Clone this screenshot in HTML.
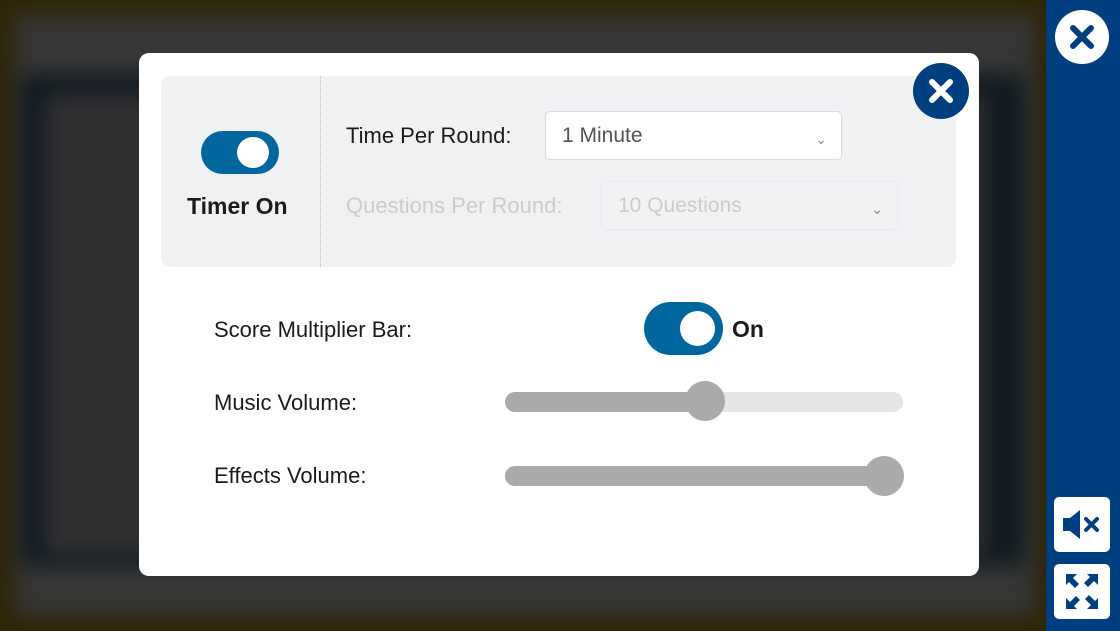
<!DOCTYPE html>
<html><head><style>
body{margin:0;width:1120px;height:631px;overflow:hidden;position:relative;background:#2f2608;font-family:"Liberation Sans",sans-serif}
.bg{position:absolute;filter:blur(10px)}
.t{position:absolute;color:#1b1b1b;white-space:nowrap}
.card{position:absolute;left:139px;top:53px;width:840px;height:523px;background:#fff;border-radius:10px}
.sel{position:absolute;border:1px solid #d6d9e6;border-radius:5px;background:#fff;font-size:21px;color:#555;padding-left:16px;box-sizing:border-box}
.sel:after{content:"⌄";position:absolute;right:14px;top:4px;font-size:14px;color:#888}
.sb{position:absolute;width:56px;height:55px;left:1054px;background:#fff;border-radius:5px}
</style></head><body>
<div class="bg" style="left:15px;top:15px;width:1020px;height:600px;background:#363636"></div>
<div class="bg" style="left:20px;top:75px;width:1005px;height:490px;background:#111a20"></div>
<div class="bg" style="left:45px;top:95px;width:940px;height:460px;background:#313131"></div>
<div style="position:absolute;left:1046px;top:0;width:74px;height:631px;background:#003f7f"></div>
<svg style="position:absolute;left:1054px;top:9px" width="56" height="56"><circle cx="28" cy="28" r="27" fill="#fff"/><path d="M19 19L37 37M37 19L19 37" stroke="#003f7f" stroke-width="6" stroke-linecap="round"/></svg>
<div class="sb" style="top:497px"><svg width="56" height="55"><path d="M9 21h7l10-8v29l-10-8H9z" fill="#003f7f"/><path d="M32 22l11 11M43 22L32 33" stroke="#003f7f" stroke-width="4" stroke-linecap="round"/></svg></div>
<div class="sb" style="top:564px"><svg width="56" height="55"><g fill="#003f7f"><path d="M12 10h11l-4 4 6 6-4 4-6-6-3 3z"/><path d="M44 10v11l-4-4-6 6-4-4 6-6-3-3z"/><path d="M12 45V34l4 4 6-6 4 4-6 6 3 3z"/><path d="M44 45H33l4-4-6-6 4-4 6 6 3-3z"/></g></svg></div>
<div class="card">
<div style="position:absolute;left:22px;top:23px;width:795px;height:191px;background:#f0f1f3;border-radius:9px"></div>
<div style="position:absolute;left:181px;top:23px;height:191px;border-left:1px dotted #bbb"></div>
<div style="position:absolute;left:62px;top:78px;width:78px;height:43px;background:#00679e;border-radius:22px"><div style="position:absolute;left:36px;top:6px;width:32px;height:31px;background:#fff;border-radius:50%"></div></div>
<div class="t" style="left:48px;top:140px;font-size:23px;font-weight:bold">Timer On</div>
<div class="t" style="left:207px;top:70px;font-size:22px">Time Per Round:</div>
<div class="sel" style="left:406px;top:58px;width:297px;height:49px;line-height:47px">1 Minute</div>
<div class="t" style="left:207px;top:140px;font-size:22px;color:#ccc">Questions Per Round:</div>
<div class="sel" style="left:462px;top:128px;width:297px;height:49px;line-height:47px;color:#ccc;border-color:#e8e8ee;background:#f1f2f4">10 Questions</div>
<svg style="position:absolute;left:774px;top:10px" width="56" height="56"><circle cx="28" cy="28" r="28" fill="#003f7f"/><path d="M19 19L37 37M37 19L19 37" stroke="#fff" stroke-width="6" stroke-linecap="round"/></svg>
<div class="t" style="left:75px;top:264px;font-size:22px">Score Multiplier Bar:</div>
<div style="position:absolute;left:505px;top:249px;width:79px;height:53px;background:#00679e;border-radius:27px"><div style="position:absolute;left:36px;top:9px;width:35px;height:35px;background:#fff;border-radius:50%"></div></div>
<div class="t" style="left:593px;top:263px;font-size:23px;font-weight:bold">On</div>
<div class="t" style="left:75px;top:337px;font-size:22px">Music Volume:</div>
<div style="position:absolute;left:366px;top:339px;width:398px;height:20px;background:#e6e6e6;border-radius:10px"></div>
<div style="position:absolute;left:366px;top:339px;width:200px;height:20px;background:#aaa;border-radius:10px"></div>
<div style="position:absolute;left:546px;top:328px;width:40px;height:40px;background:#aaa;border-radius:50%"></div>
<div class="t" style="left:75px;top:410px;font-size:22px">Effects Volume:</div>
<div style="position:absolute;left:366px;top:413px;width:398px;height:20px;background:#aaa;border-radius:10px"></div>
<div style="position:absolute;left:725px;top:403px;width:40px;height:40px;background:#aaa;border-radius:50%"></div>
</div>
</body></html>
